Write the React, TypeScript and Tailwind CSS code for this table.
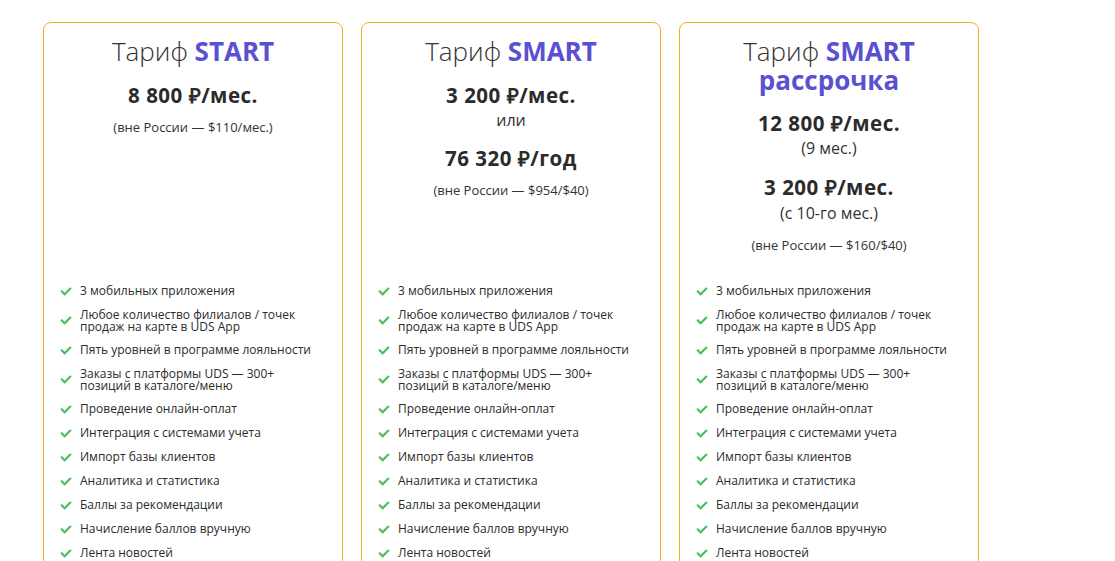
import { FaCheck } from "react-icons/fa";

const features: string[][] = [
  ["3 мобильных приложения"],
  ["Любое количество филиалов / точек", "продаж на карте в UDS App"],
  ["Пять уровней в программе лояльности"],
  ["Заказы с платформы UDS — 300+", "позиций в каталоге/меню"],
  ["Проведение онлайн-оплат"],
  ["Интеграция с системами учета"],
  ["Импорт базы клиентов"],
  ["Аналитика и статистика"],
  ["Баллы за рекомендации"],
  ["Начисление баллов вручную"],
  ["Лента новостей"],
  ["Push-уведомления"],
];

function Price({ value, className = "" }: { value: string; className?: string }) {
  return <div className={`text-[20.5px] leading-6 font-bold tracking-[0.5px] text-[#2b2b2b] ${className}`}>{value}</div>;
}

function Note({ text, className = "" }: { text: string; className?: string }) {
  return <div className={`text-[13px] leading-[18px] text-[#333] ${className}`}>{text}</div>;
}

function Sub({ text, className = "" }: { text: string; className?: string }) {
  return <div className={`text-[16px] leading-5 text-[#333] ${className}`}>{text}</div>;
}

function FeatureList() {
  return (
    <ul className="flex flex-col gap-3 pl-4 pr-4">
      {features.map((lines, i) => (
        <li key={i} className="flex items-center gap-2 min-h-3">
          <FaCheck className="w-3 h-[11px] shrink-0 text-[#4cbf5b]" />
          <span className="text-[12px] leading-[11.5px] text-[#2b2b2b]">
            {lines.map((l, j) => (
              <span key={j} className="block">{l}</span>
            ))}
          </span>
        </li>
      ))}
    </ul>
  );
}

function Card({ title, title2, children }: { title: string; title2?: string; children: React.ReactNode }) {
  return (
    <div className="w-[300px] shrink-0 border border-[#f7ae22] rounded-lg pb-10 bg-white">
      <div className="h-[262px] pt-[14px] text-center">
        <h2 className="text-[26px] leading-[29px] text-[#333]">
          <span className="font-light">Тариф </span>
          <span className="font-bold text-[#5a50d2]">{title}</span>
          {title2 && <span className="block font-bold text-[#5a50d2]">{title2}</span>}
        </h2>
        {children}
      </div>
      <FeatureList />
    </div>
  );
}

export default function App() {
  return (
    <div className="w-[1115px] h-[561px] overflow-hidden bg-white" style={{ fontFamily: '"Open Sans", "Liberation Sans", sans-serif' }}>
      <div className="flex gap-[18px] pl-[43px] pt-[22px]">
        <Card title="START">
          <Price value="8 800 ₽/мес." className="mt-[17px]" />
          <Note text="(вне России — $110/мес.)" className="mt-[11px]" />
        </Card>
        <Card title="SMART">
          <Price value="3 200 ₽/мес." className="mt-[17px]" />
          <Sub text="или" className="mt-[3px]" />
          <Price value="76 320 ₽/год" className="mt-4" />
          <Note text="(вне России — $954/$40)" className="mt-[11px]" />
        </Card>
        <Card title="SMART" title2="рассрочка">
          <Price value="12 800 ₽/мес." className="mt-4" />
          <Sub text="(9 мес.)" className="mt-[3px]" />
          <Price value="3 200 ₽/мес." className="mt-[17px]" />
          <Sub text="(с 10-го мес.)" className="mt-1" />
          <Note text="(вне России — $160/$40)" className="mt-[13px]" />
        </Card>
      </div>
    </div>
  );
}
